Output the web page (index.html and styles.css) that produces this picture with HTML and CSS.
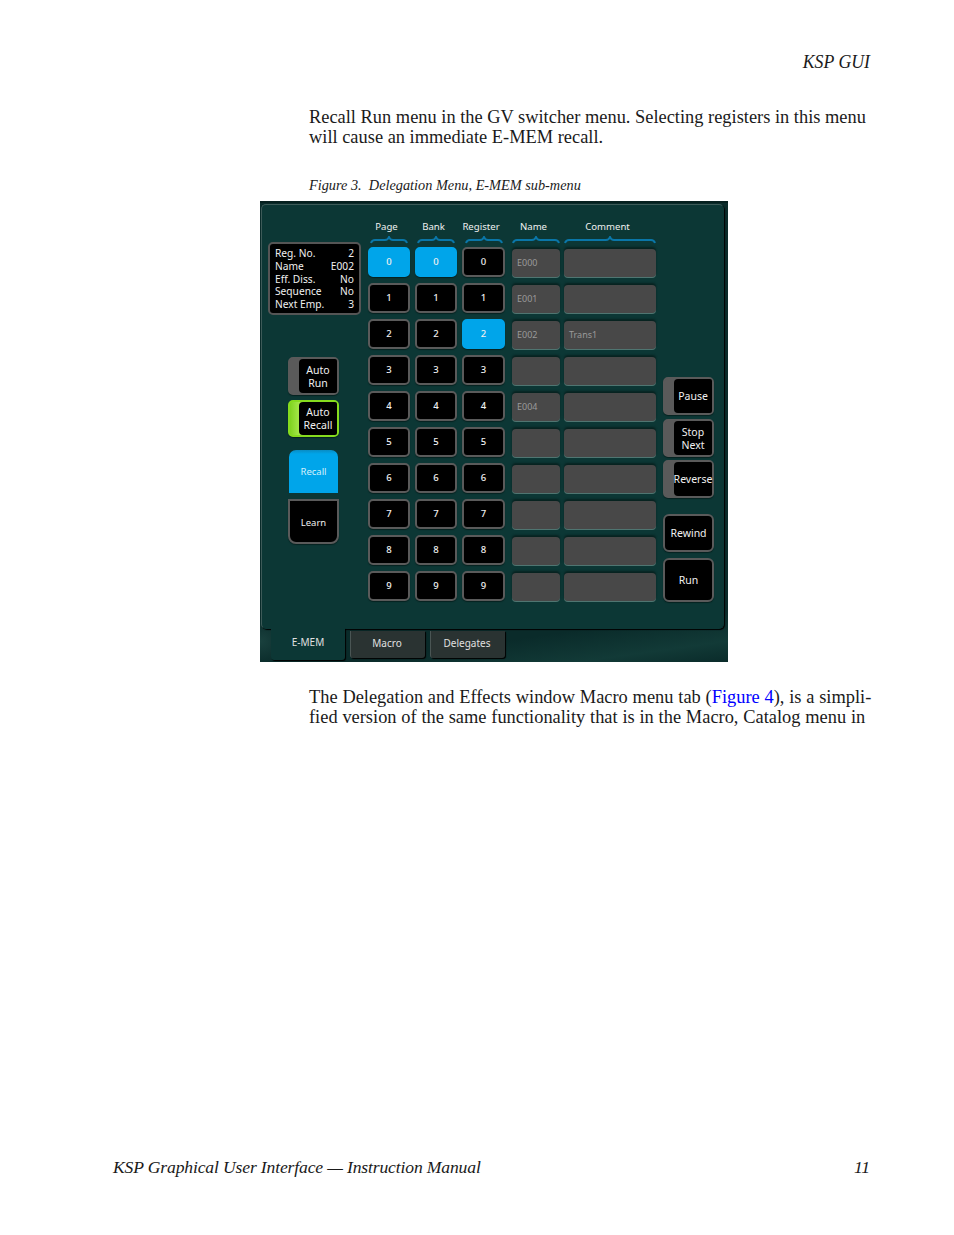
FILE: index.html
```html
<!DOCTYPE html>
<html>
  <head>
    <meta charset="UTF-8">
    <title>KSP GUI</title>
    <link rel="stylesheet" href="styles.css">
  </head>
  <body>
    <div class="page">
      <div class="running-head">KSP GUI</div>

      <p class="para first">Recall Run menu in the GV switcher menu. Selecting registers in this menu<br>will cause an immediate E-MEM recall.</p>

      <div class="caption">Figure 3.&nbsp; Delegation Menu, E-MEM sub-menu</div>

      <!-- Screenshot of the menu -->
      <div class="panel">
        <div class="panel-body">
          <div class="left-col">
            <div class="info">
              <div class="info-row"><span>Reg. No.</span><span>2</span></div>
              <div class="info-row"><span>Name</span><span>E002</span></div>
              <div class="info-row"><span>Eff. Diss.</span><span>No</span></div>
              <div class="info-row"><span>Sequence</span><span>No</span></div>
              <div class="info-row"><span>Next Emp.</span><span>3</span></div>
            </div>
            <div class="toggle auto-run"><div class="toggle-face">Auto<br>Run</div></div>
            <div class="toggle auto-recall on"><div class="toggle-face">Auto<br>Recall</div></div>
            <div class="recall">Recall</div>
            <div class="learn">Learn</div>
          </div>

          <div class="reg-grid">
            <div class="head">
              <span>Page</span>
              <svg class="brace" width="38" height="8" viewBox="0 0 38 8"><path d="M1 7Q2 4 5 4H15Q18 4 19 1Q20 4 23 4H33Q36 4 37 7"/></svg>
            </div>
            <div class="head">
              <span>Bank</span>
              <svg class="brace" width="38" height="8" viewBox="0 0 38 8"><path d="M1 7Q2 4 5 4H15Q18 4 19 1Q20 4 23 4H33Q36 4 37 7"/></svg>
            </div>
            <div class="head">
              <span>Register</span>
              <svg class="brace" width="38" height="8" viewBox="0 0 38 8"><path d="M1 7Q2 4 5 4H15Q18 4 19 1Q20 4 23 4H33Q36 4 37 7"/></svg>
            </div>
            <div class="head name">
              <span>Name</span>
              <svg class="brace" width="48" height="8" viewBox="0 0 48 8"><path d="M1 7Q2 4 5 4H20Q23 4 24 1Q25 4 28 4H43Q46 4 47 7"/></svg>
            </div>
            <div class="head comment">
              <span>Comment</span>
              <svg class="brace" width="92" height="8" viewBox="0 0 92 8"><path d="M1 7Q2 4 5 4H42Q45 4 46 1Q47 4 50 4H87Q90 4 91 7"/></svg>
            </div>

            <div class="key active">0</div><div class="key active">0</div><div class="key">0</div><div class="field name">E000</div><div class="field comment"></div>
            <div class="key">1</div><div class="key">1</div><div class="key">1</div><div class="field name">E001</div><div class="field comment"></div>
            <div class="key">2</div><div class="key">2</div><div class="key active">2</div><div class="field name">E002</div><div class="field comment">Trans1</div>
            <div class="key">3</div><div class="key">3</div><div class="key">3</div><div class="field name"></div><div class="field comment"></div>
            <div class="key">4</div><div class="key">4</div><div class="key">4</div><div class="field name">E004</div><div class="field comment"></div>
            <div class="key">5</div><div class="key">5</div><div class="key">5</div><div class="field name"></div><div class="field comment"></div>
            <div class="key">6</div><div class="key">6</div><div class="key">6</div><div class="field name"></div><div class="field comment"></div>
            <div class="key">7</div><div class="key">7</div><div class="key">7</div><div class="field name"></div><div class="field comment"></div>
            <div class="key">8</div><div class="key">8</div><div class="key">8</div><div class="field name"></div><div class="field comment"></div>
            <div class="key">9</div><div class="key">9</div><div class="key">9</div><div class="field name"></div><div class="field comment"></div>
          </div>

          <div class="right-col">
            <div class="toggle pause"><div class="toggle-face">Pause</div></div>
            <div class="toggle stop"><div class="toggle-face">Stop<br>Next</div></div>
            <div class="toggle reverse"><div class="toggle-face">Reverse</div></div>
            <div class="plain rewind">Rewind</div>
            <div class="plain run">Run</div>
          </div>
        </div>

        <div class="tabs">
          <div class="tab current">E-MEM</div>
          <div class="tab">Macro</div>
          <div class="tab">Delegates</div>
        </div>
      </div>

      <p class="para second">The Delegation and Effects window Macro menu tab (<a href="#">Figure 4</a>), is a simpli-<br>fied version of the same functionality that is in the Macro, Catalog menu in</p>

      <div class="footer">
        <span>KSP Graphical User Interface — Instruction Manual</span>
        <span>11</span>
      </div>
    </div>
  </body>
</html>
```

FILE: styles.css
```css
body {
  margin: 0;
  background: #fff;
  color: #1a1a1a;
  font-family: "Liberation Serif", serif;
}

.page {
  height: 1235px;
  box-sizing: border-box;
  padding: 52px 84px 0 113px;
  display: flex;
  flex-direction: column;
  overflow: hidden;
}

.running-head {
  font-style: italic;
  font-size: 17.8px;
  line-height: 20px;
  text-align: right;
}

.para {
  margin: 0 0 0 196px;
  font-size: 18.4px;
  line-height: 20px;
  white-space: nowrap;
}

.para.first {
  margin-top: 35px;
}

.para.second {
  margin-top: 25px;
  word-spacing: 0.2px;
}

.para a {
  color: #0000ff;
  text-decoration: none;
}

.caption {
  margin: 29px 0 0 196px;
  font-style: italic;
  font-size: 14.3px;
  line-height: 18px;
}

/* menu screenshot */
.panel {
  box-sizing: border-box;
  width: 468px;
  height: 461px;
  margin: 7px 0 0 147px;
  padding-top: 3px;
  background:
    radial-gradient(ellipse 30px 24px at 0 440px, #1a413e, transparent),
    linear-gradient(172deg, transparent 90%, #123a37 96%, #0a2b2a 100%),
    #0a2b2a;
  font-family: "Noto Sans", sans-serif;
  font-size: 10px;
  color: #f0f0f0;
  box-shadow: inset 0 2px 0 #06201f;
}

.panel-body {
  box-sizing: border-box;
  width: 463px;
  height: 425px;
  margin-left: 1px;
  padding-left: 6px;
  display: flex;
  background: #0c3735;
  border: 1px solid #3d5a58;
  border-right-color: #0c3735;
  border-bottom-color: #0c3735;
  border-radius: 5px;
  box-shadow: 1px 1px 1px #000;
}

.left-col {
  width: 100px;
  padding-top: 37px;
  display: flex;
  flex-direction: column;
  align-items: flex-start;
}

.info {
  box-sizing: border-box;
  width: 93px;
  height: 73px;
  padding: 3px 5px 0 5px;
  background: #000;
  border: 2px solid #555;
  border-radius: 5px;
  font-size: 10.2px;
  line-height: 12.8px;
}

.info-row {
  display: flex;
  justify-content: space-between;
}

.toggle {
  box-sizing: border-box;
  width: 51px;
  background: #5a5a5a;
  border: 2px solid #5a5a5a;
  border-radius: 5px;
  display: flex;
  justify-content: flex-end;
  box-shadow: 0 1px 1px #062220;
}

.toggle-face {
  width: 38px;
  background: #000;
  border-radius: 4px 2px 2px 4px;
  display: flex;
  align-items: center;
  justify-content: center;
  text-align: center;
  line-height: 12.8px;
  font-size: 10.5px;
}

.auto-run {
  height: 38px;
  margin: 42px 0 0 20px;
}

.auto-run .toggle-face,
.stop .toggle-face {
  padding-top: 2px;
}

.auto-recall {
  height: 37px;
  margin: 5px 0 0 20px;
}

.toggle.on {
  background: linear-gradient(90deg, #7fd320, #a6e84a 20%, #86dc1e);
  border-color: #86dc1e;
}

.recall {
  box-sizing: border-box;
  width: 49px;
  height: 43px;
  margin: 13px 0 0 21px;
  background: linear-gradient(#0a8cc4, #00a5ea 4px);
  border-radius: 7px 7px 0 0;
  display: flex;
  align-items: center;
  justify-content: center;
  color: #d5f0fb;
  font-size: 9.5px;
}

.learn {
  box-sizing: border-box;
  width: 51px;
  height: 45px;
  margin: 6px 0 0 20px;
  padding-top: 2px;
  background: #000;
  border: 2px solid #5a5a5a;
  border-radius: 0 0 8px 8px;
  display: flex;
  align-items: center;
  justify-content: center;
  font-size: 9.5px;
  box-shadow: 0 1px 1px #062220;
}

.reg-grid {
  display: grid;
  grid-template-columns: 42px 42px 43px 50px 91px;
  grid-template-rows: 36px repeat(10, 30px);
  column-gap: 5px;
  row-gap: 6px;
  margin-bottom: auto;
}

.head {
  display: flex;
  flex-direction: column;
  align-items: center;
  justify-content: flex-end;
  margin-bottom: -3px;
  font-size: 9.6px;
  line-height: 12px;
}

.head.name {
  margin-left: 2px;
}

.head.comment {
  margin-left: -1px;
}

.head span {
  margin: 0 5px 3px 0;
  white-space: nowrap;
}

.brace {
  display: block;
  flex: none;
}

.brace path {
  fill: none;
  stroke: #0a76a8;
  stroke-width: 2;
}

.key {
  box-sizing: border-box;
  padding-bottom: 2px;
  background: #000;
  border: 2px solid #5a5a5a;
  border-radius: 5px;
  display: flex;
  align-items: center;
  justify-content: center;
  font-size: 9.5px;
  font-weight: 500;
  box-shadow: 0 1px 1px #062220;
}

.key.active {
  background: #00a5ea;
  border-color: #00a5ea;
}

.field {
  box-sizing: border-box;
  margin-top: 2px;
  background: #484848;
  border-radius: 4px;
  padding: 0 0 2px 5px;
  display: flex;
  align-items: center;
  color: #9a9a9a;
  font-size: 9px;
  box-shadow: 0 -2px 2px #082220, 0 1px 0 #4f7571;
}

.field.name {
  margin-left: 2px;
}

.field.comment {
  margin-left: -1px;
}

.right-col {
  width: 51px;
  margin-left: 7px;
  padding-top: 172px;
  display: flex;
  flex-direction: column;
}

.toggle.pause,
.toggle.stop,
.toggle.reverse {
  height: 38px;
}

.toggle.pause {
  margin-bottom: 4px;
}

.toggle.stop {
  margin-bottom: 3px;
}

.toggle.reverse {
  margin-bottom: 16px;
}

.plain {
  box-sizing: border-box;
  background: #000;
  border: 2px solid #5a5a5a;
  border-radius: 6px;
  display: flex;
  align-items: center;
  justify-content: center;
  font-size: 10.5px;
  box-shadow: 0 1px 1px #062220;
}

.rewind {
  height: 38px;
  margin-bottom: 6px;
}

.run {
  height: 44px;
}

.tabs {
  display: flex;
  gap: 5px;
  margin: -1px 0 0 11px;
}

.tab {
  box-sizing: border-box;
  width: 75px;
  height: 27px;
  margin-top: 3px;
  padding: 0 2px 4px 0;
  background: #2a3332;
  border-left: 1px solid #4a5554;
  border-radius: 0 0 3px 3px;
  display: flex;
  align-items: center;
  justify-content: center;
  color: #e0e0e0;
  box-shadow: 1px 1px 1px #000;
}

.tab.current {
  width: 74px;
  height: 32px;
  margin-top: 0;
  padding: 0 0 4px;
  background: #0c3735;
  border-left: 0;
}

.footer {
  margin-top: auto;
  margin-bottom: 58px;
  display: flex;
  justify-content: space-between;
  font-style: italic;
  font-size: 17.6px;
  letter-spacing: -0.15px;
  line-height: 20px;
}
```
